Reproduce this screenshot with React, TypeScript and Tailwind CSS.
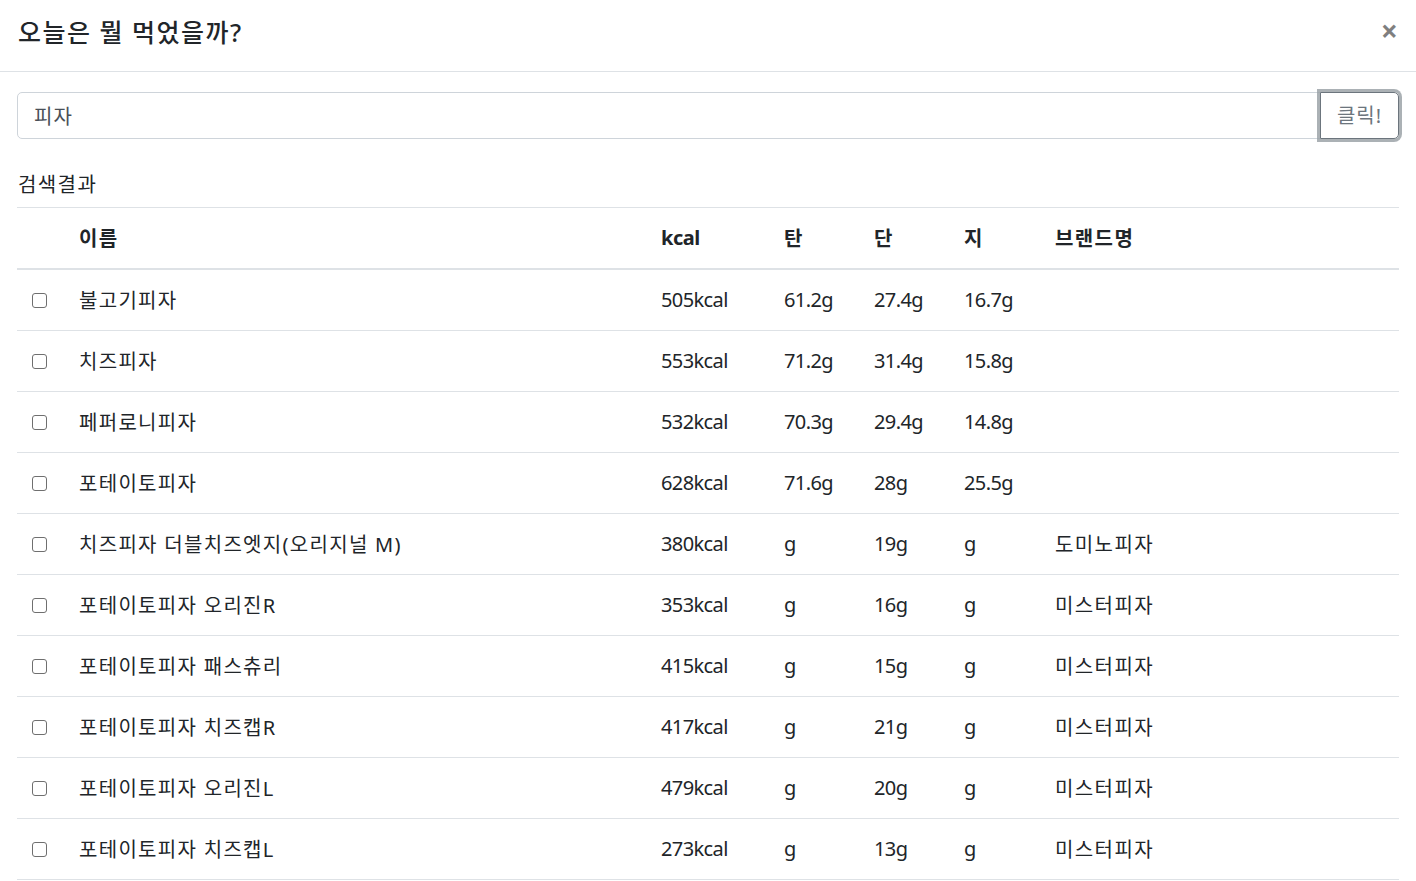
import React from 'react';

type Food = {
  name: string;
  kcal: string;
  carb: string;
  protein: string;
  fat: string;
  brand: string;
};

const foods: Food[] = [
  { name: '불고기피자', kcal: '505kcal', carb: '61.2g', protein: '27.4g', fat: '16.7g', brand: '' },
  { name: '치즈피자', kcal: '553kcal', carb: '71.2g', protein: '31.4g', fat: '15.8g', brand: '' },
  { name: '페퍼로니피자', kcal: '532kcal', carb: '70.3g', protein: '29.4g', fat: '14.8g', brand: '' },
  { name: '포테이토피자', kcal: '628kcal', carb: '71.6g', protein: '28g', fat: '25.5g', brand: '' },
  { name: '치즈피자 더블치즈엣지(오리지널 M)', kcal: '380kcal', carb: 'g', protein: '19g', fat: 'g', brand: '도미노피자' },
  { name: '포테이토피자 오리진R', kcal: '353kcal', carb: 'g', protein: '16g', fat: 'g', brand: '미스터피자' },
  { name: '포테이토피자 패스츄리', kcal: '415kcal', carb: 'g', protein: '15g', fat: 'g', brand: '미스터피자' },
  { name: '포테이토피자 치즈캡R', kcal: '417kcal', carb: 'g', protein: '21g', fat: 'g', brand: '미스터피자' },
  { name: '포테이토피자 오리진L', kcal: '479kcal', carb: 'g', protein: '20g', fat: 'g', brand: '미스터피자' },
  { name: '포테이토피자 치즈캡L', kcal: '273kcal', carb: 'g', protein: '13g', fat: 'g', brand: '미스터피자' },
];

const font = { fontFamily: '"Noto Sans", "Noto Sans CJK KR", sans-serif' };

export default function App() {
  return (
    <div className="w-[1416px] h-[881px] overflow-hidden bg-white text-[#212529] text-[20px] leading-[30px]" style={font}>
      {/* modal header */}
      <div className="h-[72px] border-b border-[#dee2e6] flex items-start justify-between pl-[18px] pr-[18px] pt-[14px]">
        <h5 className="text-[25px] leading-[37px] font-medium tracking-[1.5px]">오늘은 뭘 먹었을까?</h5>
        <button className="text-[30px] leading-[37px] font-bold text-black/50 -mt-[2px]">×</button>
      </div>

      {/* modal body */}
      <div className="pl-[17px] pr-[17px] pt-[20px]">
        <div className="flex h-[47px]">
          <input
            defaultValue="피자"
            className="flex-1 h-[47px] border border-[#ced4da] rounded-l-[5px] px-[16px] text-[20px] text-[#495057] outline-none tracking-[1px]"
            style={font}
          />
          <button className="h-[47px] w-[79px] -ml-px border border-[#6c757d] rounded-r-[5px] text-[20px] text-[#6c757d] tracking-[1px] shadow-[0_0_0_3px_rgba(150,157,163,0.8)] relative">
            클릭!
          </button>
        </div>

        <div className="mt-[31px] pl-[1px] leading-[30px] tracking-[1.4px]">검색결과</div>

        <table className="mt-[7px] w-[1382px] border-collapse table-fixed">
          <colgroup>
            <col className="w-[47px]" />
            <col className="w-[582px]" />
            <col className="w-[123px]" />
            <col className="w-[90px]" />
            <col className="w-[90px]" />
            <col className="w-[91px]" />
            <col className="w-[359px]" />
          </colgroup>
          <thead>
            <tr className="border-t border-b-2 border-[#dee2e6] h-[61px] font-bold text-left">
              <th className="px-[15px] pt-[15px] pb-[15px] align-top"></th>
              <th className="px-[15px] pt-[16px] pb-[14px] align-top tracking-[1.4px]">이름</th>
              <th className="px-[15px] pt-[15px] pb-[15px] align-top tracking-[-0.5px]">kcal</th>
              <th className="px-[15px] pt-[16px] pb-[14px] align-top">탄</th>
              <th className="px-[15px] pt-[16px] pb-[14px] align-top">단</th>
              <th className="px-[15px] pt-[16px] pb-[14px] align-top">지</th>
              <th className="px-[15px] pt-[16px] pb-[14px] align-top tracking-[1.4px]">브랜드명</th>
            </tr>
          </thead>
          <tbody>
            {foods.map((f, i) => (
              <tr key={i} className={`h-[61px] ${i > 0 ? 'border-t border-[#dee2e6]' : ''} border-b border-[#dee2e6]`}>
                <td className="px-[15px] py-[15px] align-top">
                  <div className="h-[30px] flex items-center">
                    <input
                      type="checkbox"
                      className="appearance-none w-[15px] h-[15px] border border-[#6f6f6f] rounded-[3px] bg-white"
                    />
                  </div>
                </td>
                <td className="px-[15px] pt-[16px] pb-[14px] align-top whitespace-nowrap tracking-[1.3px]">{f.name}</td>
                <td className="px-[15px] pt-[15px] pb-[15px] align-top tracking-[-0.6px]">{f.kcal}</td>
                <td className="px-[15px] pt-[15px] pb-[15px] align-top tracking-[-0.6px]">{f.carb}</td>
                <td className="px-[15px] pt-[15px] pb-[15px] align-top tracking-[-0.6px]">{f.protein}</td>
                <td className="px-[15px] pt-[15px] pb-[15px] align-top tracking-[-0.6px]">{f.fat}</td>
                <td className="px-[15px] pt-[16px] pb-[14px] align-top tracking-[1.4px]">{f.brand}</td>
              </tr>
            ))}
          </tbody>
        </table>
      </div>
    </div>
  );
}
